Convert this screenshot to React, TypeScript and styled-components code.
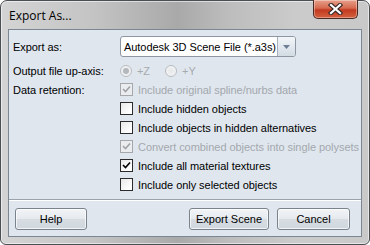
import styled, { createGlobalStyle } from 'styled-components';

const Global = createGlobalStyle`
  html, body {
    margin: 0;
    padding: 0;
    background: #ffffff;
  }
  body {
    font-family: Tahoma, "Liberation Sans", Arial, sans-serif;
    font-size: 11px;
    color: #000;
  }
`;

const Window = styled.div`
  box-sizing: border-box;
  width: 370px;
  height: 245px;
  border: 1px solid #4b4f54;
  border-radius: 7px 7px 6px 6px;
  background: linear-gradient(
    90deg,
    #d4d4d4 0%,
    #c4c4c4 25%,
    #a9a9a9 48%,
    #bdbdbd 62%,
    #cbcbcb 80%,
    #c9c9c9 100%
  );
  box-shadow: inset 0 0 0 1px rgba(255, 255, 255, 0.55);
  padding: 0 7px 7px 7px;
  display: flex;
  flex-direction: column;
`;

const TitleBar = styled.div`
  height: 28px;
  display: flex;
  align-items: flex-start;
  justify-content: space-between;
`;

const Title = styled.div`
  font-family: "Open Sans", "Noto Sans", sans-serif;
  font-size: 12px;
  color: #000;
  padding: 6px 0 0 1px;
`;

const CloseButton = styled.div`
  box-sizing: border-box;
  width: 45px;
  height: 19px;
  margin: -1px 4px 0 0;
  border: 1px solid #4a2a22;
  border-top: none;
  border-radius: 0 0 5px 5px;
  background: linear-gradient(180deg, #e8a08c 0%, #d66a50 45%, #c23a20 55%, #d4603f 100%);
  box-shadow: inset 0 0 0 1px rgba(255, 255, 255, 0.35);
  display: flex;
  align-items: center;
  justify-content: center;
`;

const Client = styled.div`
  flex: 1;
  border: 1px solid #7d8791;
  background: #dfe6ee;
  display: flex;
  flex-direction: column;
  padding: 6px 11px 0 4px;
  letter-spacing: -0.05px;
`;

const Form = styled.div`
  display: grid;
  grid-template-columns: 107px 1fr;
  grid-auto-rows: 19px;
  align-items: center;
`;

const Label = styled.div<{ $row?: number }>`
  grid-column: 1;
  grid-row: ${(p) => p.$row ?? 'auto'};
`;

const ComboRow = styled.div`
  display: grid;
  grid-template-columns: 107px 1fr;
  align-items: center;
  height: 21px;
  margin-bottom: 4px;
`;

const Combo = styled.div`
  width: 176px;
  height: 21px;
  box-sizing: border-box;
  border: 1px solid #8e97a1;
  border-radius: 3px;
  background: #fff;
  display: flex;
  align-items: stretch;
  overflow: hidden;
`;

const ComboText = styled.div`
  flex: 1;
  padding-left: 3px;
  display: flex;
  align-items: center;
  white-space: nowrap;
`;

const ComboButton = styled.div`
  width: 17px;
  border-left: 1px solid #a6b0ba;
  background: linear-gradient(180deg, #f3f6f9 0%, #e3e9ef 50%, #d3dbe3 100%);
  display: flex;
  align-items: center;
  justify-content: center;
`;

const Options = styled.div`
  display: flex;
  align-items: center;
  gap: 15px;
`;

const RadioItem = styled.div`
  display: flex;
  align-items: center;
  gap: 5px;
  color: #a7abb0;
`;

const Radio = styled.span<{ $checked?: boolean }>`
  width: 12px;
  height: 12px;
  box-sizing: border-box;
  border-radius: 50%;
  border: 1px solid #b8bcc1;
  background: radial-gradient(circle, #e4e6e8 0%, #f8f8f8 100%);
  display: flex;
  align-items: center;
  justify-content: center;
  &::after {
    content: '';
    display: ${(p) => (p.$checked ? 'block' : 'none')};
    width: 6px;
    height: 6px;
    border-radius: 50%;
    background: #b4b8bd;
  }
`;

const CheckItem = styled.div<{ $disabled?: boolean }>`
  grid-column: 2;
  display: flex;
  align-items: center;
  gap: 5px;
  white-space: nowrap;
  color: ${(p) => (p.$disabled ? '#a3a8ad' : '#000')};
`;

const Box = styled.span<{ $disabled?: boolean }>`
  width: 13px;
  height: 13px;
  box-sizing: border-box;
  border: 1px solid ${(p) => (p.$disabled ? '#a4a8ad' : '#2b2b2b')};
  background: ${(p) => (p.$disabled ? '#eaecee' : 'linear-gradient(135deg, #e8e8e8 0%, #ffffff 80%)')};
  display: flex;
  align-items: center;
  justify-content: center;
  flex-shrink: 0;
`;

const Separator = styled.div`
  margin: 5px -11px 0 -4px;
  height: 0;
  border-top: 1px solid #9aa2ab;
  border-bottom: 1px solid #ffffff;
`;

const Footer = styled.div`
  display: flex;
  align-items: center;
  padding: 7px 0 0 2px;
  gap: 8px;
`;

const Spacer = styled.div`
  flex: 1;
`;

const Button = styled.button<{ $w: number }>`
  width: ${(p) => p.$w}px;
  height: 22px;
  box-sizing: border-box;
  border: 1px solid #7a838c;
  border-radius: 3px;
  background: linear-gradient(180deg, #f2f4f7 0%, #e6eaee 48%, #d6dce2 52%, #d0d7de 100%);
  box-shadow: inset 0 0 0 1px rgba(255, 255, 255, 0.7);
  font-family: inherit;
  font-size: 11px;
  color: #000;
  padding: 0;
`;

function Check({ disabled }: { disabled?: boolean }) {
  return (
    <svg width="9" height="9" viewBox="0 0 9 9">
      <path d="M1 4 L3.5 6.5 L8 1.5" fill="none" stroke={disabled ? '#9ea3a8' : '#000'} strokeWidth="1.6" />
    </svg>
  );
}

const retention = [
  { label: 'Include original spline/nurbs data', checked: true, disabled: true },
  { label: 'Include hidden objects' },
  { label: 'Include objects in hidden alternatives' },
  { label: 'Convert combined objects into single polysets', checked: true, disabled: true },
  { label: 'Include all material textures', checked: true },
  { label: 'Include only selected objects' },
];

export default function App() {
  return (
    <>
      <Global />
      <Window>
        <TitleBar>
          <Title>Export As...</Title>
          <CloseButton>
            <svg width="15" height="12" viewBox="0 0 15 12">
              <path d="M3 2 L12 10 M12 2 L3 10" stroke="#3b2a28" strokeWidth="4.4" strokeLinecap="square" />
              <path d="M3 2 L12 10 M12 2 L3 10" stroke="#ffffff" strokeWidth="2.2" strokeLinecap="square" />
            </svg>
          </CloseButton>
        </TitleBar>
        <Client>
          <ComboRow>
            <Label>Export as:</Label>
            <Combo>
              <ComboText>Autodesk 3D Scene File (*.a3s)</ComboText>
              <ComboButton>
                <svg width="7" height="4" viewBox="0 0 7 4">
                  <path d="M0 0 H7 L3.5 4 Z" fill="#6d7f94" />
                </svg>
              </ComboButton>
            </Combo>
          </ComboRow>
          <Form>
            <Label $row={1}>Output file up-axis:</Label>
            <Options>
              <RadioItem>
                <Radio $checked />
                +Z
              </RadioItem>
              <RadioItem>
                <Radio />
                +Y
              </RadioItem>
            </Options>
            <Label $row={2}>Data retention:</Label>
            {retention.map((item) => (
              <CheckItem key={item.label} $disabled={item.disabled}>
                <Box $disabled={item.disabled}>{item.checked && <Check disabled={item.disabled} />}</Box>
                {item.label}
              </CheckItem>
            ))}
          </Form>
          <Separator />
          <Footer>
            <Button $w={72}>Help</Button>
            <Spacer />
            <Button $w={80}>Export Scene</Button>
            <Button $w={73}>Cancel</Button>
          </Footer>
        </Client>
      </Window>
    </>
  );
}
